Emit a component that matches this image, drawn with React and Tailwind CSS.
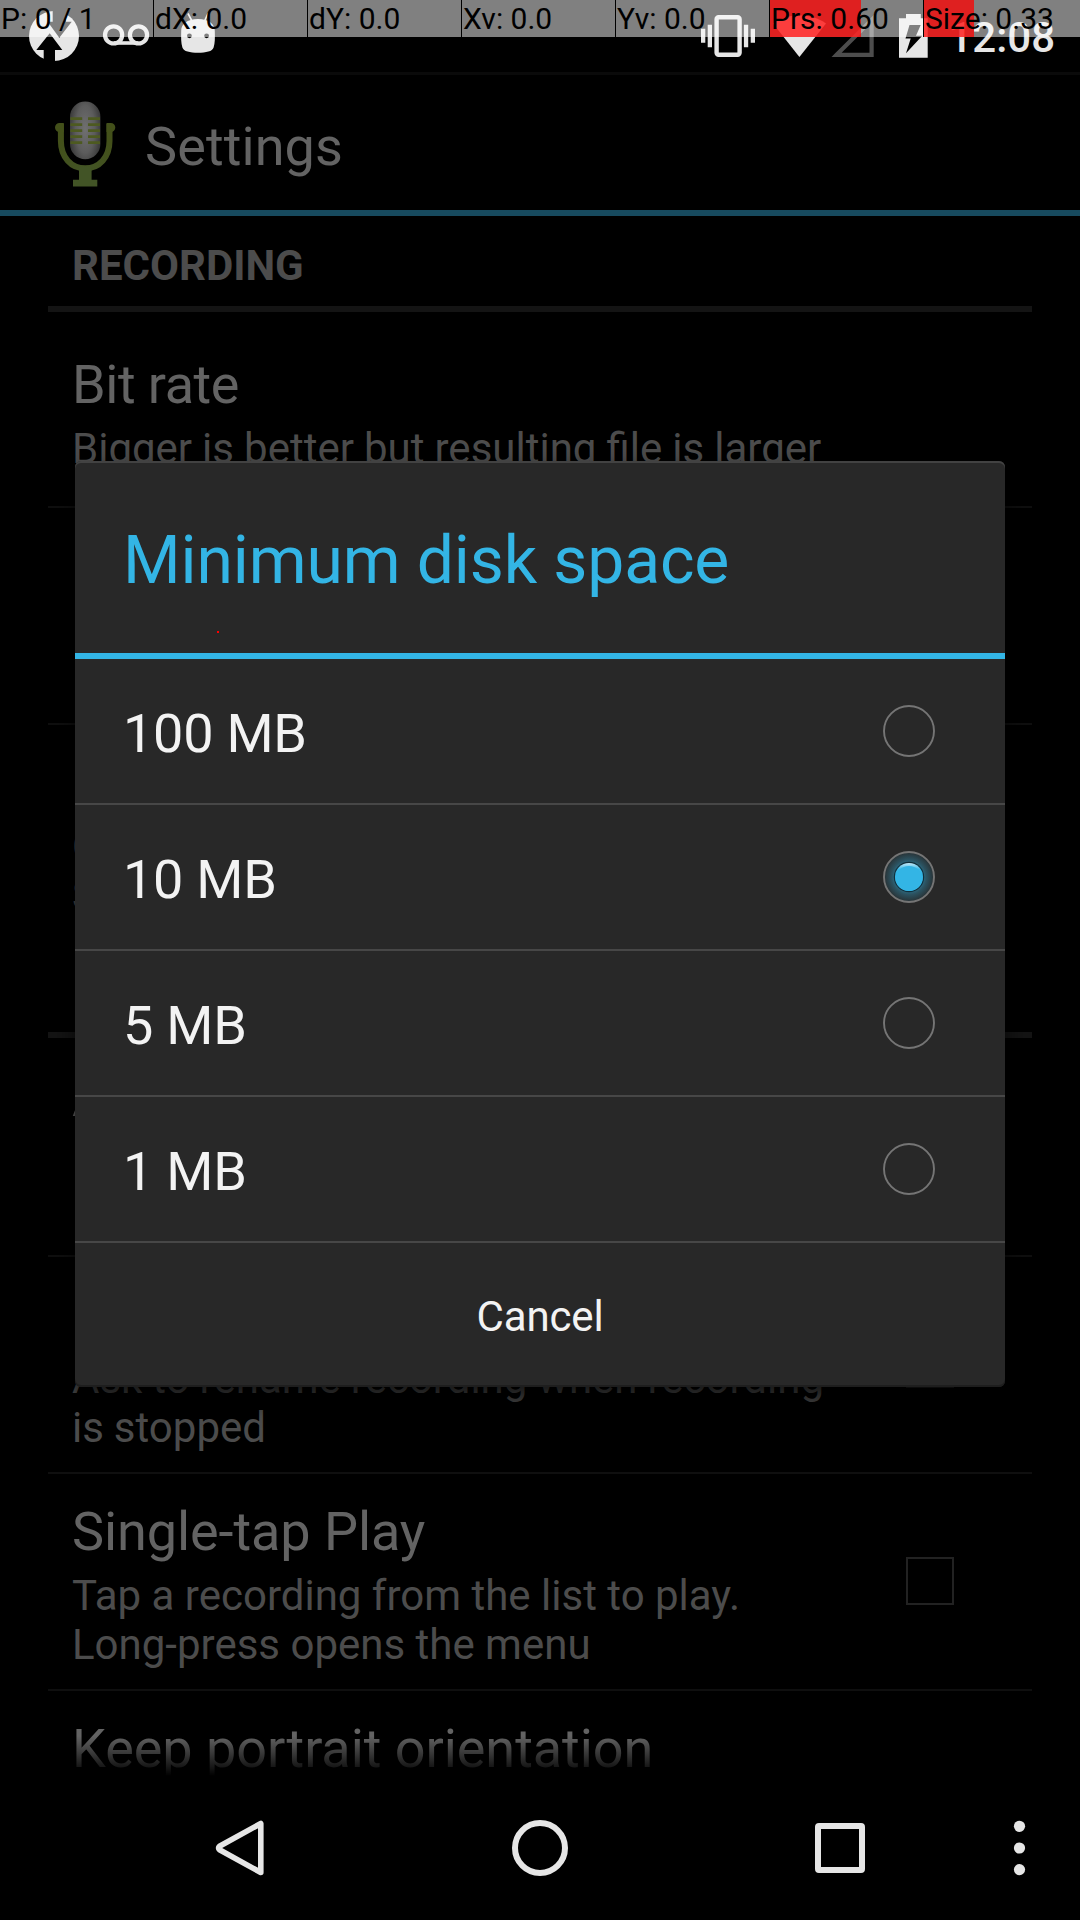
import React from "react";

const metrics = [
  { label: "P: 0 / 1", level: 0 },
  { label: "dX: 0.0", level: 0 },
  { label: "dY: 0.0", level: 0 },
  { label: "Xv: 0.0", level: 0 },
  { label: "Yv: 0.0", level: 0 },
  { label: "Prs: 0.60", level: 91 },
  { label: "Size: 0.33", level: 50 },
];

const options = [
  { label: "100 MB", checked: false },
  { label: "10 MB", checked: true },
  { label: "5 MB", checked: false },
  { label: "1 MB", checked: false },
];

function PointerBar() {
  return (
    <div className="absolute left-0 top-0 z-30 flex h-[37px] w-[1080px] overflow-hidden">
      {metrics.map((m, i) => (
        <div
          key={m.label}
          className={
            i === 6
              ? "relative h-full w-[156px] shrink-0 bg-white/50"
              : "relative mr-px h-full w-[153px] shrink-0 bg-white/50 shadow-[1px_0_0_#000]"
          }
        >
          <div className="absolute left-0 top-0 h-full bg-[#ff0000]/75" style={{ width: m.level }} />
          <span className="relative block whitespace-pre pl-px text-[30px] leading-[37px] text-black">{m.label}</span>
        </div>
      ))}
    </div>
  );
}

function StatusBar() {
  return (
    <div className="flex h-[72px] items-start justify-between bg-black pr-[25px]">
      <svg width="240" height="72" viewBox="0 0 240 72">
        <circle cx="54" cy="36" r="25" fill="#e6e6e6" />
        <path d="M49.7 33.3 L62.3 50 H55 V62 H43.7 V50 H36.3 Z" fill="#000" />
        <path d="M52.7 9 H66 V21.7 H71.7 L59.3 37.7 L47.7 21.7 H52.7 Z" fill="#000" />
        <g fill="none" stroke="#e6e6e6" strokeWidth="4.2">
          <circle cx="113.6" cy="34.9" r="8.6" />
          <circle cx="138.5" cy="34.9" r="8.6" />
          <path d="M113.6 43 H138.5" strokeWidth="3.6" />
        </g>
        <path d="M188 13.5 L192 21 M208 13.5 L204.5 21" stroke="#e6e6e6" strokeWidth="1.6" />
        <path d="M181.2 31 C181 24 187 19 198 19 C209 19 215 24 214.8 31 C215 38 215 43 213.6 47.5 C212.5 51.5 206 52.7 198 52.7 C190 52.7 183.5 51.5 182.4 47.5 C181 43 181 38 181.2 31 Z" fill="#e6e6e6" />
        <circle cx="189.4" cy="35.8" r="2.4" fill="#000" />
        <circle cx="206.6" cy="35.8" r="2.4" fill="#000" />
      </svg>
      <div className="flex">
        <svg width="240" height="72" viewBox="700 0 240 72">
          <rect x="716.6" y="17.3" width="23" height="37.4" rx="2" fill="none" stroke="#e6e6e6" strokeWidth="4.4" />
          <path d="M701 28.7h4.3v14H701z M707.7 24.7h4.3v22.6h-4.3z M743.9 24.7h4.3v22.6h-4.3z M750.7 28.7h4.3v14h-4.3z" fill="#e6e6e6" />
          <path d="M799.4 56.9 L773 23.6 C788 12.5 811 12.5 826 23.6 Z" fill="#e6e6e6" />
          <path d="M836.6 54.8 L871.6 20 V54.8 Z" fill="none" stroke="#4d4d4d" strokeWidth="4.2" />
          <path d="M899 18.3 H906 V14 H920.8 V18.3 H927.7 V57.8 H899 Z" fill="#e6e6e6" />
          <path d="M909.5 25 H920.7 L916 35.7 H922.3 L906 53.3 L910.7 38.5 H905.5 Z" fill="#000" />
        </svg>
        <span className="ml-[8px] w-[107px] pt-[1px] text-right text-[42px] font-medium leading-[73px] text-[#e6e6e6]">12:08</span>
      </div>
    </div>
  );
}

function MicIcon() {
  return (
    <svg width="64" height="96" viewBox="53 96 64 96" className="relative top-px ml-[53px]">
      <defs>
        <radialGradient id="mic" cx="0.5" cy="0.48" r="0.75" gradientTransform="translate(0.12 0) scale(0.76 1)">
          <stop offset="0" stopColor="#707070" />
          <stop offset="0.55" stopColor="#5c5c5c" />
          <stop offset="1" stopColor="#333333" />
        </radialGradient>
        <radialGradient id="stand" gradientUnits="userSpaceOnUse" cx="85" cy="174" r="40">
          <stop offset="0" stopColor="#425426" />
          <stop offset="1" stopColor="#43501a" />
        </radialGradient>
      </defs>
      <rect x="70" y="101.5" width="30.4" height="57.8" rx="15.2" fill="url(#mic)" />
      <path d="M70.4 118.6h11.8m5.8 0h12 M70.4 124.6h11.8m5.8 0h12 M70.4 130.6h11.8m5.8 0h12 M70.4 136.6h11.8m5.8 0h12 M70.4 142.6h11.8m5.8 0h12" stroke="#4d5a20" strokeWidth="2.8" />
      <path d="M60.9 124 V141 C60.9 157 71 168.3 85.2 168.3 C99.4 168.3 109.5 157 109.5 141 V124" fill="none" stroke="url(#stand)" strokeWidth="6" />
      <path d="M59.5 123 H63.8 V132 H59.5 A4.5 4.5 0 0 1 59.5 123 Z M110.8 123 H106.5 V132 H110.8 A4.5 4.5 0 0 0 110.8 123 Z" fill="#43501a" />
      <path d="M79 167 H91.6 V179.8 H97.3 V186.6 H73 V179.8 H79 Z" fill="#425426" />
    </svg>
  );
}

function CategoryHeader({ children }) {
  return (
    <div className="mx-12 h-24 border-b-[6px] border-[#141414] pl-6 pt-[25px] text-[42px] font-bold leading-[49px] text-[#4c4c4c]">
      {children}
    </div>
  );
}

function Preference({ title, lines = [], checkbox, box, titleClass = "" }) {
  return (
    <div className={"mx-12 flex items-center justify-between border-[#0f0f0f] pl-6 pr-[78px] " + box}>
      <div className="h-full whitespace-pre">
        <div className={"h-[63px] text-[54px] leading-[63px] text-[#636363] " + titleClass}>{title}</div>
        <div className="mt-2 text-[42px] leading-[49px] text-[#4c4c4c]">
          {lines.map((l, i) => (
            <div key={i} className="h-[49px]">{l}</div>
          ))}
        </div>
      </div>
      {checkbox && <div className="-mt-[28px] size-12 border-2 border-[#222]" />}
    </div>
  );
}

function Radio({ checked }) {
  return (
    <svg width="52" height="52" viewBox="0 0 52 52">
      {checked && (
        <>
          <defs>
            <radialGradient id="glow">
              <stop offset="0.5" stopColor="#33b5e5" stopOpacity="0.55" />
              <stop offset="0.7" stopColor="#33b5e5" stopOpacity="0.3" />
              <stop offset="1" stopColor="#33b5e5" stopOpacity="0.06" />
            </radialGradient>
            <linearGradient id="dot" x1="0" y1="0" x2="0" y2="1">
              <stop offset="0" stopColor="#c4e9f8" />
              <stop offset="0.22" stopColor="#3dbae8" />
              <stop offset="0.35" stopColor="#33b5e5" />
            </linearGradient>
          </defs>
          <circle cx="26" cy="26" r="25" fill="url(#glow)" />
          <circle cx="26" cy="26" r="15.2" fill="#12303c" />
          <circle cx="26" cy="26" r="14" fill="url(#dot)" />
          <ellipse cx="26" cy="27.4" rx="13.4" ry="12.5" fill="#33b5e5" />
        </>
      )}
      <circle cx="26" cy="26" r="25" fill="none" stroke="#757575" strokeWidth="1.9" />
    </svg>
  );
}

function Dialog() {
  return (
    <div className="absolute left-[75px] top-[461px] z-20 w-[930px] rounded-[6px] bg-[#282828] text-[#f3f3f3] shadow-[inset_0_2px_0_#424242,inset_0_-2px_0_#1e1e1e,0_12px_24px_rgba(0,0,0,0.75)]">
      <div className="relative h-[198px] border-b-[6px] border-[#33b5e5] pl-12 pt-[61px] text-[66px] leading-[77px] tracking-[-0.12px] text-[#33b5e5]">
        Minimum disk space
        <div className="absolute left-[142px] top-[170px] size-[2px] bg-[#ff0000]" />
      </div>
      {options.map((o) => (
        <div key={o.label} className="flex h-[146px] items-center justify-between border-b-2 border-[#474747] pl-12 pr-[70px]">
          <span className="pt-[5px] text-[54px] leading-[64px] tracking-[-0.25px]">{o.label}</span>
          <Radio checked={o.checked} />
        </div>
      ))}
      <div className="flex h-36 items-center justify-center pt-[3px] text-[42px] leading-[50px] tracking-[-0.15px]">Cancel</div>
    </div>
  );
}

function NavBar() {
  return (
    <svg width="1080" height="144" viewBox="0 1776 1080 144" fill="none" stroke="#e6e6e6" strokeWidth="6" className="relative block bg-black">
      <path d="M260.8 1823.5 V1872.5 L219.5 1849.8 Q217.6 1848 219.5 1846.2 Z" strokeWidth="5.6" strokeLinejoin="round" />
      <circle cx="540" cy="1848" r="25" />
      <rect x="818" y="1826" width="44" height="44" rx="1" />
      <g fill="#e6e6e6" stroke="none">
        <circle cx="1019.5" cy="1826.3" r="5.6" />
        <circle cx="1019.5" cy="1848" r="5.6" />
        <circle cx="1019.5" cy="1869.6" r="5.6" />
      </g>
    </svg>
  );
}

export default function App() {
  return (
    <div className="relative h-[1920px] w-[1080px] overflow-hidden bg-black font-[Roboto,sans-serif]">
      <StatusBar />
      <div className="flex h-36 items-center border-b-[6px] border-t-[3px] border-b-[#174a5e] border-t-[#0a0a0a]">
        <MicIcon />
        <span className="ml-7 pt-[8px] text-[54px] leading-[64px] tracking-[0.1px] text-[#636363]">Settings</span>
      </div>
      <div className="h-[1560px] overflow-hidden">
        <CategoryHeader>RECORDING</CategoryHeader>
        <Preference
          box="h-[196px] border-b-2 pt-[41px] [word-spacing:-0.35px]"
          titleClass="tracking-[-0.42px]"
          title="Bit rate"
          lines={["Bigger is better but resulting file is larger"]}
        />
        <Preference box="h-[217px] border-b-2 pt-[26px]" />
        <Preference box="h-[217px] pt-[26px]" lines={["O", "S"]} />
        <CategoryHeader />
        <Preference box="h-[219px] border-b-2 pt-[28px]" title="A" />
        <Preference
          box="h-[217px] border-b-2 pt-[26px] [word-spacing:-0.45px]"
          lines={["Ask to rename recording when recording", "is stopped"]}
          checkbox
        />
        <Preference
          box="h-[217px] border-b-2 pt-[26px]"
          titleClass="tracking-[-0.08px]"
          title="Single-tap Play"
          lines={["Tap a recording from the list to play.", "Long-press opens the menu"]}
          checkbox
        />
        <Preference box="h-[217px] pt-[26px]" titleClass="tracking-[-0.05px]" title="Keep portrait orientation" />
      </div>
      <div className="relative -mt-10 h-10 bg-linear-to-b from-transparent to-black" />
      <NavBar />
      <Dialog />
      <PointerBar />
    </div>
  );
}
